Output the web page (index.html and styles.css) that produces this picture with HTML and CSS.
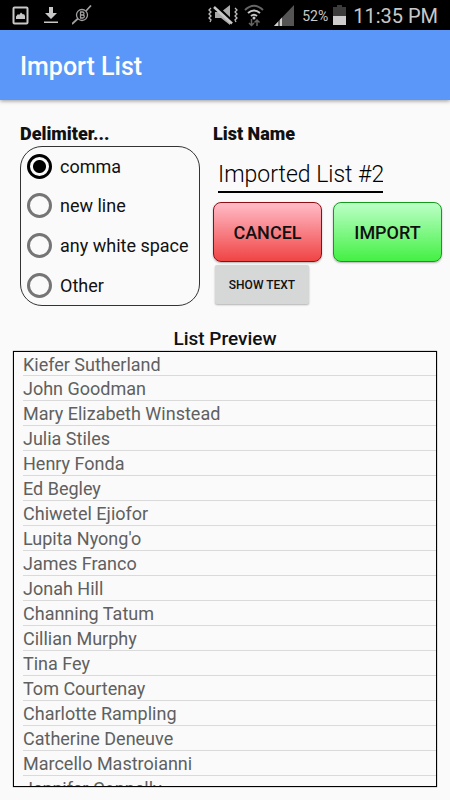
FILE: index.html
```html
<!DOCTYPE html>
<html lang="en">
<head>
<meta charset="utf-8">
<meta name="viewport" content="width=device-width, initial-scale=1">
<title>Import List</title>
<link rel="stylesheet" href="styles.css">
</head>
<body>
<div class="status">
  <div class="status-group notifications">
    <svg width="18" height="20" viewBox="0 0 18 20" aria-hidden="true"><rect x="1.5" y="2.5" width="14" height="16" rx="1" fill="none" stroke="#c8c8c8" stroke-width="2"/><path d="M4 14v-2.500l2-2.500 1 1 2-2.500 2 2 1-.5 1 2V14z" fill="#c8c8c8"/></svg>
    <svg width="14" height="18" viewBox="0 0 14 18" aria-hidden="true"><path d="M5 1h4v6h4l-6 6-6-6h4zM0 15.500h14v1.500H0z" fill="#c8c8c8"/></svg>
    <svg width="20" height="20" viewBox="0 0 20 20" aria-hidden="true"><g fill="none" stroke="#a0a0a0" stroke-width="1.300"><circle cx="10" cy="10" r="5.500"/><path d="M0 19l6-5.500M14 6l5-5.500" stroke-width="1.700"/><path d="M8.500 7v6M8 7h2.500q1.500 0 1.500 1.500T10.500 10H8.500h2.300q1.500 0 1.500 1.500T10.800 13H8"/></g></svg>
  </div>
  <div class="status-group">
    <svg width="30" height="22" viewBox="0 0 30 22" aria-hidden="true"><path d="M7 8h6l9-7v20l-9-7H7z" fill="#aaa"/><path d="M7 1l18 17" stroke="#000" stroke-width="3"/><path d="M6 3l18 16.500" stroke="#c8c8c8" stroke-width="2.500"/><path d="M3 4L1 6l2 2-2 2 2 2-2 2 2 2-1 2M27 4l2 2-2 2 2 2-2 2 2 2-2 2 1 2" fill="none" stroke="#bbb" stroke-width="1.300"/></svg>
    <svg class="wifi" width="20" height="24" viewBox="0 0 20 24" aria-hidden="true"><g fill="none" stroke-width="2"><path d="M1 7Q10-1.500 19 7" stroke="#666"/><path d="M4 10q6-5 12 0M7 13q3-2.500 6 0" stroke="#c8c8c8"/></g><circle cx="10" cy="15" r="1.500" fill="#c8c8c8"/><path d="M7.500 16v6M5 20l2.500 2.500L10 20M13 23v-6M10.500 19.500L13 17l2.500 2.500" fill="none" stroke="#666" stroke-width="1.500"/></svg>
    <svg class="signal" width="20" height="21" viewBox="0 0 20 21" aria-hidden="true"><path d="M20 0v21H0z" fill="#555"/><path d="M8 12.600V21H0z" fill="#d0d0d0"/><path d="M5 14v7" stroke="#000"/></svg>
    <span class="percent">52%</span>
    <svg class="battery" width="13" height="20" viewBox="0 0 13 20" aria-hidden="true"><path d="M4 0h5v2h4v18H0V2h4z" fill="#3c3c3c"/><path d="M0 11h13v9H0z" fill="#ccc"/></svg>
    <span class="clock">11:35 PM</span>
  </div>
</div>
<header class="appbar"><h1>Import List</h1></header>
<main>
  <form class="settings">
    <section>
      <h2 id="delimiter-title">Delimiter...</h2>
      <div class="options" role="radiogroup" aria-labelledby="delimiter-title">
        <label><input type="radio" name="delimiter" checked>comma</label>
        <label><input type="radio" name="delimiter">new line</label>
        <label><input type="radio" name="delimiter">any white space</label>
        <label><input type="radio" name="delimiter">Other</label>
      </div>
    </section>
    <section>
      <h2><label for="list-name">List Name</label></h2>
      <input class="name" id="list-name" type="text" value="Imported List #2">
      <div class="actions">
        <button class="action cancel" type="button">CANCEL</button>
        <button class="action import" type="button">IMPORT</button>
      </div>
      <button class="show" type="button">SHOW TEXT</button>
    </section>
  </form>
  <h2 class="preview-title">List Preview</h2>
  <ul class="preview">
    <li>Kiefer Sutherland</li>
    <li>John Goodman</li>
    <li>Mary Elizabeth Winstead</li>
    <li>Julia Stiles</li>
    <li>Henry Fonda</li>
    <li>Ed Begley</li>
    <li>Chiwetel Ejiofor</li>
    <li>Lupita Nyong'o</li>
    <li>James Franco</li>
    <li>Jonah Hill</li>
    <li>Channing Tatum</li>
    <li>Cillian Murphy</li>
    <li>Tina Fey</li>
    <li>Tom Courtenay</li>
    <li>Charlotte Rampling</li>
    <li>Catherine Deneuve</li>
    <li>Marcello Mastroianni</li>
    <li>Jennifer Connelly</li>
  </ul>
</main>
</body>
</html>
```
FILE: styles.css
```css
* { box-sizing: border-box; }

body {
  display: flex;
  flex-direction: column;
  height: 100vh;
  margin: 0;
  background: #fafafa;
  color: #111;
  font-family: Roboto, sans-serif;
  font-size: 18px;
}

h1, h2, ul { margin: 0; padding: 0; }

.status {
  display: flex;
  flex: none;
  justify-content: space-between;
  height: 30px;
  padding: 0 12px;
  background: #000;
  color: #c8c8c8;
}

.status-group { display: flex; align-items: center; }
.notifications { gap: 14px; }
.wifi { margin-left: 6px; }
.signal { margin-left: 10px; }
.percent { margin: 2px 5px 0 8px; font-size: 14px; }
.clock { margin: 2px 0 0 7px; font-size: 20px; }

.appbar {
  display: flex;
  flex: none;
  align-items: center;
  height: 70px;
  padding: 2px 20px 0;
  background: #5a97f9;
  box-shadow: 0 1px 4px rgba(0, 0, 0, .4);
  color: #fff;
}

.appbar h1 { font-size: 25px; font-weight: 500; }

main {
  display: flex;
  flex: 1;
  flex-direction: column;
  min-height: 0;
  padding: 22px 0 13px;
}

.settings {
  display: grid;
  grid-template-columns: 180px 1fr;
  gap: 13px;
  padding: 0 8px 0 20px;
}

h2 { font-size: 18px; font-weight: 900; line-height: 24px; }

.options {
  border: 1px solid #333;
  border-radius: 22px;
}

.options label {
  display: flex;
  align-items: center;
  gap: 8px;
  height: 40px;
  padding-left: 6px;
}

.options label:first-child { height: 38px; }

.options input {
  appearance: none;
  width: 25px;
  height: 25px;
  margin: 0;
  border: 3px solid #757575;
  border-radius: 50%;
}

.options input:checked {
  border-color: #000;
  background: radial-gradient(circle, #000 6px, transparent 7px);
}

.name {
  display: block;
  width: 165px;
  height: 36px;
  margin: 11px 5px 9px;
  padding: 0;
  border: 0;
  border-bottom: 2px solid #000;
  outline: 0;
  background: none;
  color: #000;
  font: 300 23px Roboto, sans-serif;
}

.actions {
  display: grid;
  grid-template-columns: 1fr 1fr;
  gap: 11px;
}

button { font-family: Roboto, sans-serif; font-weight: 500; color: #111; }

.action {
  height: 60px;
  border: 1px solid;
  border-radius: 8px;
  box-shadow: 0 1px 2px rgba(0, 0, 0, .3);
  font-size: 18px;
}

.cancel {
  border-color: #900c14;
  background: linear-gradient(#ffbcc7, #f04444);
}

.import {
  border-color: #149a1c;
  background: linear-gradient(#bcffc7, #44f044);
}

.show {
  display: block;
  width: 94px;
  height: 39px;
  margin: 3px 2px 0;
  padding: 0;
  border: 0;
  border-radius: 2px;
  background: #d6d8d7;
  box-shadow: 0 1px 2px rgba(0, 0, 0, .3);
  font-size: 12px;
}

.preview-title {
  margin-top: 21px;
  font-size: 19px;
  font-weight: 500;
  text-align: center;
}

.preview {
  flex: 1;
  min-height: 0;
  margin: 0 13px;
  padding-left: 9px;
  overflow: hidden;
  border: 1px solid #000;
  box-shadow: 0 0 1px rgba(0, 0, 0, .7);
  color: #606060;
  list-style: none;
}

.preview li {
  height: 25px;
  border-bottom: 1px solid #dadada;
  line-height: 25px;
}

.preview li:first-child { height: 24px; }
```
